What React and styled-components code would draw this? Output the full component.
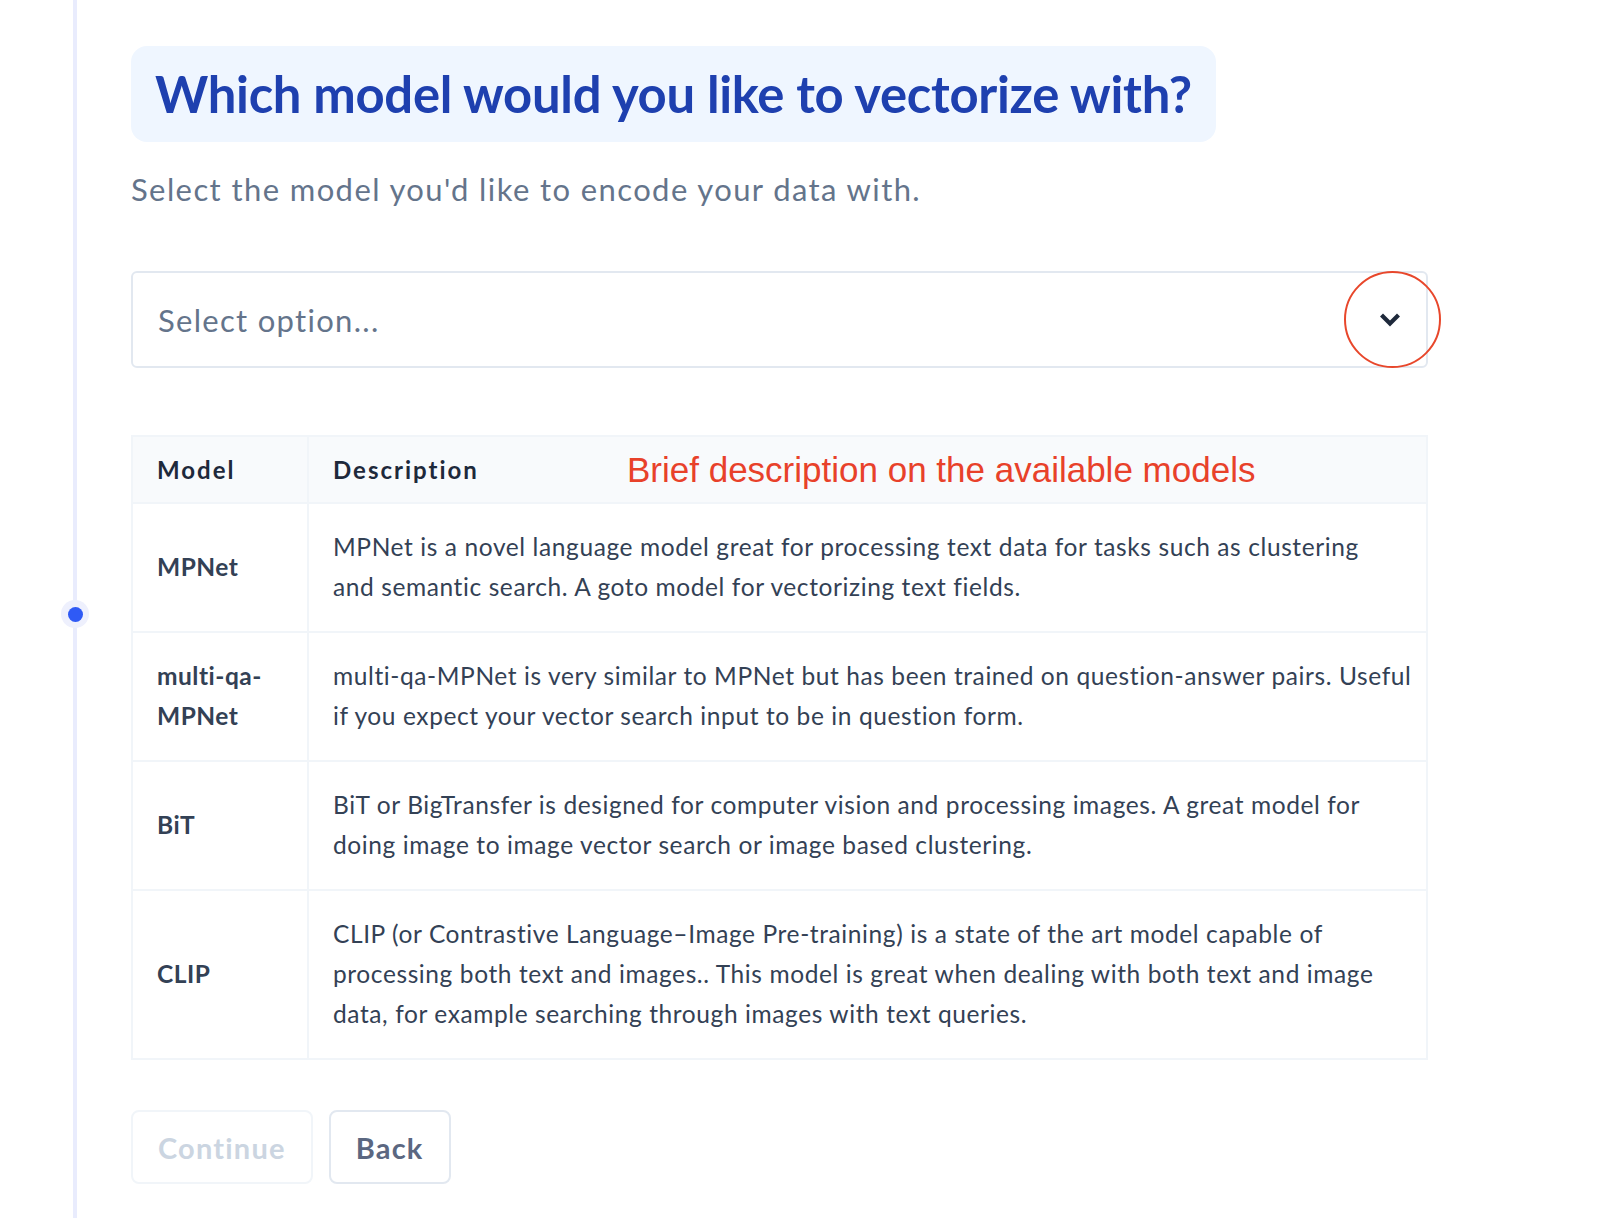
import styled, { createGlobalStyle } from 'styled-components';

const GlobalStyle = createGlobalStyle`
    html, body {
        margin: 0;
        padding: 0;
        background: #ffffff;
    }
    body {
        font-family: Lato, "Noto Sans", sans-serif;
        -webkit-font-smoothing: antialiased;
    }
`;

const Page = styled.div`
    display: flex;
    min-height: 1218px;
`;

const Rail = styled.div`
    position: relative;
    flex: 0 0 4px;
    margin-left: 73px;
    background: #e9ecfd;

    .dot {
        position: absolute;
        top: 600px;
        left: -12px;
        width: 28px;
        height: 28px;
        border-radius: 50%;
        background: #eef0fd;
        display: flex;
        align-items: center;
        justify-content: center;
    }

    .dot::after {
        content: '';
        width: 15px;
        height: 15px;
        border-radius: 50%;
        background: #2f5af5;
    }
`;

const Content = styled.main`
    flex: 1;
    padding: 46px 0 0 54px;
    display: flex;
    flex-direction: column;
    align-items: flex-start;
`;

const Title = styled.h1`
    margin: 0;
    padding: 0 24px;
    height: 96px;
    line-height: 96px;
    border-radius: 16px;
    background: #eff6ff;
    color: #1e40af;
    font-size: 50.8px;
    font-weight: 700;
    letter-spacing: -0.3px;
`;

const Subtitle = styled.p`
    margin: 29px 0 0;
    font-size: 31px;
    line-height: 36px;
    letter-spacing: 1.4px;
    color: #64748b;
`;

const Select = styled.div`
    position: relative;
    box-sizing: border-box;
    width: 1297px;
    height: 97px;
    margin-top: 64px;
    padding: 0 24px 0 25px;
    border: 2px solid #e2e8f0;
    border-radius: 6px;
    display: flex;
    align-items: center;
    justify-content: space-between;

    span {
        font-size: 31px;
        letter-spacing: 1.3px;
        color: #64748b;
    }
`;

const Chevron = styled.svg`
    width: 20px;
    height: 14px;
    margin-right: 2px;
`;

const Callout = styled.div`
    position: absolute;
    top: -2px;
    right: -15px;
    width: 97px;
    height: 97px;
    box-sizing: border-box;
    border: 2.5px solid #e8472b;
    border-radius: 50%;
    pointer-events: none;
`;

const Table = styled.table`
    width: 1297px;
    margin-top: 67px;
    table-layout: fixed;
    border-collapse: collapse;
    border: 2px solid #f1f5f9;
    color: #334155;
`;

const Col = styled.col`
    width: ${props => props.$width || 'auto'};
`;

const HeadCell = styled.th`
    position: relative;
    padding: 20px 24px 19px;
    text-align: left;
    font-size: 24px;
    line-height: 26px;
    font-weight: 700;
    letter-spacing: 2px;
    color: #1e293b;
    background: #f8fafc;
    border: 2px solid #f1f5f9;
`;

const Note = styled.span`
    position: absolute;
    left: 318px;
    top: 50%;
    transform: translateY(-50%);
    font-family: "Liberation Sans", Arial, sans-serif;
    font-size: 35px;
    line-height: 40px;
    font-weight: 400;
    letter-spacing: 0;
    color: #e8412a;
    white-space: nowrap;
`;

const Cell = styled.td`
    padding: 23px 24px 24px;
    border: 2px solid #f1f5f9;
    font-size: 24.5px;
    line-height: 40px;
    vertical-align: middle;
    font-weight: ${props => (props.$name ? 700 : 400)};
    letter-spacing: ${props => (props.$name ? '0.5px' : '0.6px')};
    white-space: nowrap;
`;

const Actions = styled.div`
    display: flex;
    gap: 16px;
    margin-top: 50px;
`;

const Button = styled.button`
    height: 74px;
    padding: 0 25px;
    background: #ffffff;
    border: 2px solid ${props => (props.disabled ? '#f1f5f9' : '#e2e8f0')};
    border-radius: 8px;
    font-family: Lato, "Noto Sans", sans-serif;
    font-size: 29px;
    font-weight: 700;
    letter-spacing: 1.2px;
    color: ${props => (props.disabled ? '#cbd5e1' : '#5b6781')};
    cursor: ${props => (props.disabled ? 'default' : 'pointer')};
`;

const models = [
    {
        name: 'MPNet',
        lines: [
            'MPNet is a novel language model great for processing text data for tasks such as clustering',
            'and semantic search. A goto model for vectorizing text fields.',
        ],
    },
    {
        name: ['multi-qa-', 'MPNet'],
        lines: [
            'multi-qa-MPNet is very similar to MPNet but has been trained on question-answer pairs. Useful',
            'if you expect your vector search input to be in question form.',
        ],
    },
    {
        name: 'BiT',
        lines: [
            'BiT or BigTransfer is designed for computer vision and processing images. A great model for',
            'doing image to image vector search or image based clustering.',
        ],
    },
    {
        name: 'CLIP',
        lines: [
            'CLIP (or Contrastive Language–Image Pre-training) is a state of the art model capable of',
            'processing both text and images.. This model is great when dealing with both text and image',
            'data, for example searching through images with text queries.',
        ],
    },
];

const withBreaks = parts =>
    [].concat(parts).map((part, i, all) => (
        <span key={i}>
            {part}
            {i < all.length - 1 && <br />}
        </span>
    ));

export default function App() {
    return (
        <>
            <GlobalStyle />
            <Page>
                <Rail>
                    <div className="dot"></div>
                </Rail>
                <Content>
                    <Title>Which model would you like to vectorize with?</Title>
                    <Subtitle>Select the model you'd like to encode your data with.</Subtitle>

                    <Select>
                        <span>Select option...</span>
                        <Chevron viewBox="0 0 20 14">
                            <path d="M3 3.5 L10 10.5 L17 3.5" fill="none" stroke="#1e293b" strokeWidth="4.2" strokeLinecap="square" strokeLinejoin="miter" />
                        </Chevron>
                        <Callout />
                    </Select>

                    <Table>
                        <colgroup>
                            <Col $width="176px" />
                            <Col />
                        </colgroup>
                        <thead>
                            <tr>
                                <HeadCell>Model</HeadCell>
                                <HeadCell>
                                    Description
                                    <Note>Brief description on the available models</Note>
                                </HeadCell>
                            </tr>
                        </thead>
                        <tbody>
                            {models.map((m, i) => (
                                <tr key={i}>
                                    <Cell $name>{withBreaks(m.name)}</Cell>
                                    <Cell>{withBreaks(m.lines)}</Cell>
                                </tr>
                            ))}
                        </tbody>
                    </Table>

                    <Actions>
                        <Button disabled>Continue</Button>
                        <Button>Back</Button>
                    </Actions>
                </Content>
            </Page>
        </>
    );
}
